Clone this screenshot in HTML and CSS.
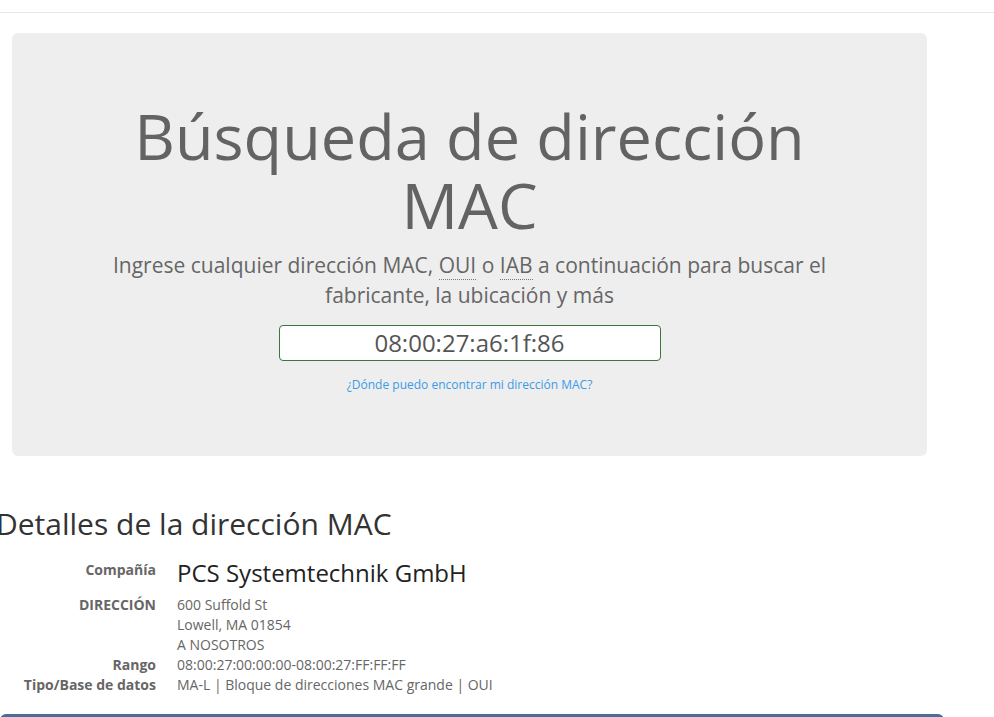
FILE: index.html
```html
<!DOCTYPE html>
<html lang="es">
<head>
<meta charset="utf-8">
<title>Búsqueda de dirección MAC</title>
<link rel="stylesheet" href="styles.css">
</head>
<body>
<header class="topbar"></header>
<main class="page">
  <section class="jumbotron">
    <div class="jumbo-inner">
      <h1 class="jumbo-title">Búsqueda de dirección MAC</h1>
      <p class="jumbo-lead">Ingrese cualquier dirección MAC, <abbr title="Organizationally Unique Identifier">OUI</abbr> o <abbr title="Individual Address Block">IAB</abbr> a continuación para buscar el fabricante, la ubicación y más</p>
      <div class="search-box">08:00:27:a6:1f:86</div>
      <a class="help-link" href="#">¿Dónde puedo encontrar mi dirección MAC?</a>
    </div>
  </section>
  <section class="details">
    <h2 class="details-title">Detalles de la dirección MAC</h2>
    <dl class="info">
      <dt class="info-key">Compañía</dt>
      <dd class="info-val company">PCS Systemtechnik GmbH</dd>
      <dt class="info-key">DIRECCIÓN</dt>
      <dd class="info-val">600 Suffold St<br>Lowell, MA 01854<br>A NOSOTROS</dd>
      <dt class="info-key">Rango</dt>
      <dd class="info-val">08:00:27:00:00:00-08:00:27:FF:FF:FF</dd>
      <dt class="info-key">Tipo/Base de datos</dt>
      <dd class="info-val">MA-L | Bloque de direcciones MAC grande | OUI</dd>
    </dl>
  </section>
  <div class="bottom-bar"></div>
</main>
</body>
</html>
```

FILE: styles.css
```css
* { box-sizing: border-box; }
html, body { margin: 0; padding: 0; }
body {
  background: #fff;
  font-family: "Open Sans", "Liberation Sans", sans-serif;
  font-size: 14px;
  line-height: 1.42857;
  color: #333;
  width: 994px;
  height: 717px;
  overflow: hidden;
}
.topbar {
  height: 13px;
  border-bottom: 1px solid #e7e7e7;
}
.page {
  width: 944px;
}
.jumbotron {
  margin: 20px 0 0 12px;
  width: 915px;
  height: 423px;
  background: #eeeeee;
  border-radius: 6px;
  padding: 48px 0 0;
  text-align: center;
}
.jumbo-inner {
  width: 740px;
  margin: 0 auto;
  display: flex;
  flex-direction: column;
  align-items: center;
}
.jumbo-title {
  margin: 20px 0 10px;
  font-size: 63px;
  font-weight: 400;
  line-height: 1.1;
  color: #636363;
  width: 700px;
}
.jumbo-lead {
  margin: 0 0 15px;
  font-size: 21px;
  line-height: 30px;
  color: #666;
}
abbr {
  text-decoration: none;
  border-bottom: 1px dotted #777;
}
.search-box {
  width: 382px;
  height: 36px;
  border: 1px solid #3c763d;
  border-radius: 4px;
  background: #fff;
  font-size: 24px;
  line-height: 34px;
  color: #555;
  text-align: center;
}
.help-link {
  margin-top: 16px;
  font-size: 12px;
  line-height: 16px;
  color: #3b9be8;
  text-decoration: none;
}
.details {
  margin-left: -4px;
  padding-top: 48px;
}
.details-title {
  margin: 0 0 16px;
  font-size: 30px;
  font-weight: 400;
  line-height: 40px;
  color: #333;
}
.info {
  margin: 0;
  display: grid;
  grid-template-columns: 160px 1fr;
  column-gap: 21px;
}
.info-key {
  text-align: right;
  font-weight: 700;
  font-size: 14px;
  line-height: 20px;
  color: #666;
}
.info-val {
  margin: 0;
  font-size: 14px;
  line-height: 20px;
  color: #666;
}
.company {
  font-size: 24px;
  line-height: 32px;
  color: #222;
  margin-top: -3px;
  margin-bottom: 6px;
}
.bottom-bar {
  margin-top: 19px;
  height: 10px;
  background: #4a6f96;
  border-radius: 6px 6px 0 0;
}
```
